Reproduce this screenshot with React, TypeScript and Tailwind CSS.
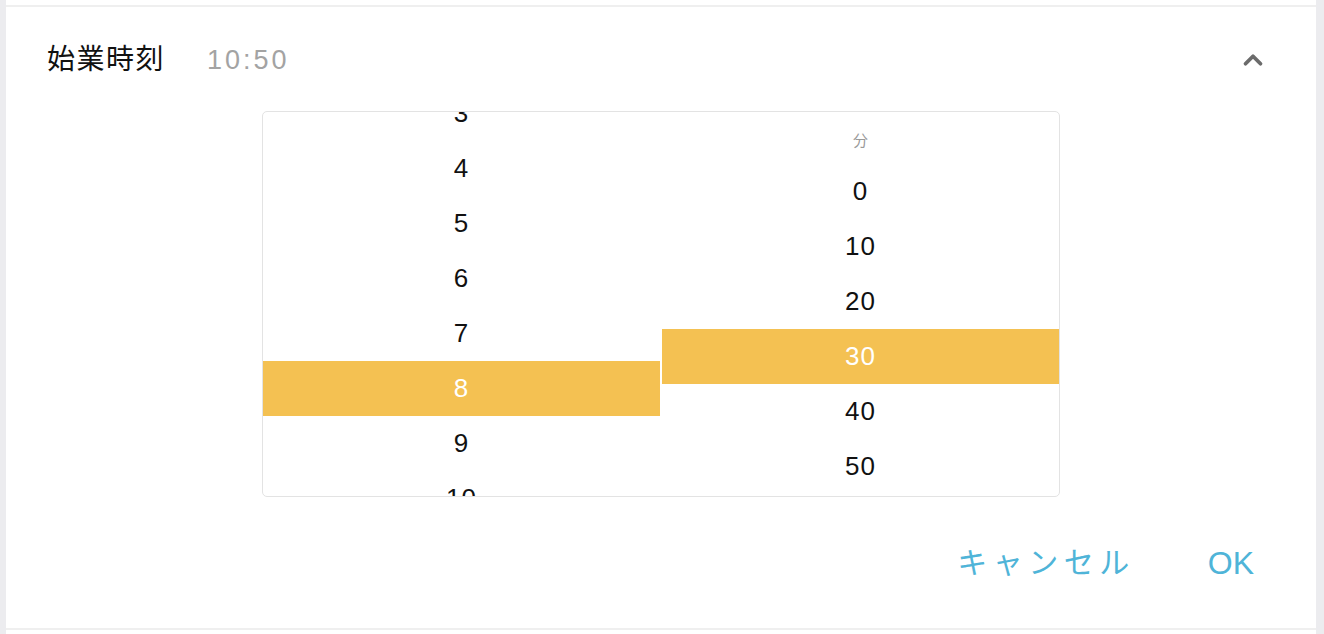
import { ChevronUp } from "lucide-react";

const hours = [3, 4, 5, 6, 7, 8, 9, 10];
const minutes = [0, 10, 20, 30, 40, 50];

const font = {
  fontFamily: '"Liberation Sans", "Noto Sans CJK JP", sans-serif',
};

const Row = ({ label, active }: { label: number; active: boolean }) => (
  <div
    className={
      "h-[55px] shrink-0 flex items-center justify-center text-[26px] tracking-[1px] " +
      (active ? "bg-[#f4c152] text-white" : "text-[#111]")
    }
  >
    {label}
  </div>
);

export default function App() {
  return (
    <div className="w-[1324px] h-[634px] flex bg-white overflow-hidden" style={font}>
      <div className="w-[6px] h-full bg-[#ececef]" />
      <div className="flex-1 flex flex-col pt-[5px]">
        <div className="h-[625px] flex flex-col border-t-2 border-b-2 border-[#efefef] bg-white">
          {/* header */}
          <div className="h-[104px] shrink-0 flex items-center pl-[41px] pr-[48px] pt-[2px]">
            <span className="text-[28px] tracking-[1.5px] text-[#111]">始業時刻</span>
            <span className="ml-[42px] text-[27px] tracking-[3px] text-[#a3a3a3]">10:50</span>
            <ChevronUp className="ml-auto w-[30px] h-[30px] text-[#6b6b6b]" strokeWidth={3} />
          </div>

          {/* picker */}
          <div className="mx-auto shrink-0 w-[798px] h-[386px] border border-[#e3e3e3] rounded-[5px] flex gap-[2px] overflow-hidden">
            <div className="flex-1 flex flex-col overflow-hidden">
              <div className="mt-[-26px] flex flex-col">
                {hours.map((h) => (
                  <Row key={h} label={h} active={h === 8} />
                ))}
              </div>
            </div>
            <div className="flex-1 flex flex-col overflow-hidden">
              <div className="h-[52px] shrink-0 flex items-center justify-center pt-[6px] text-[15px] text-[#9a9a9a]">
                分
              </div>
              {minutes.map((m) => (
                <Row key={m} label={m} active={m === 30} />
              ))}
            </div>
          </div>

          {/* actions */}
          <div className="flex-1 flex items-center justify-end gap-[73px] pr-[62px] text-[#4fb4d8]">
            <button className="text-[30px] tracking-[5.5px]">キャンセル</button>
            <button className="text-[32px]">OK</button>
          </div>
        </div>
      </div>
      <div className="w-[8px] h-full bg-[#ececef]" />
    </div>
  );
}
